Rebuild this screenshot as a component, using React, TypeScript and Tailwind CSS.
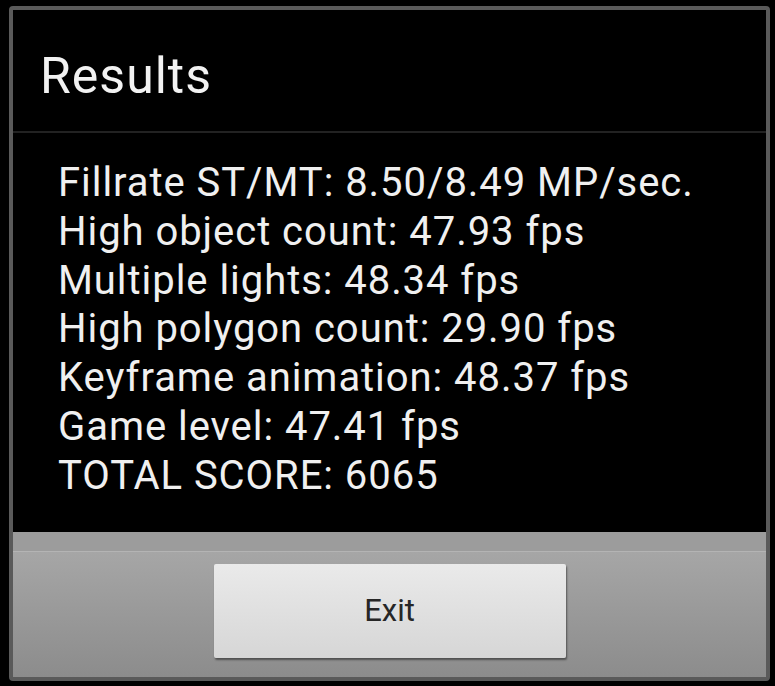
const lines = [
  'Fillrate ST/MT: 8.50/8.49 MP/sec.',
  'High object count: 47.93 fps',
  'Multiple lights: 48.34 fps',
  'High polygon count: 29.90 fps',
  'Keyframe animation: 48.37 fps',
  'Game level: 47.41 fps',
  'TOTAL SCORE: 6065',
]

export default function App() {
  return (
    <div className="min-h-screen w-full bg-black pl-[9px] pt-[6px] font-['Roboto',sans-serif]">
      <div className="flex h-[675px] w-[761px] flex-col overflow-hidden rounded-[4px] border-4 border-[#5a5a5a] bg-black">
        {/* Title */}
        <div className="flex h-[121px] shrink-0 items-center pl-[27px] pt-[11px]">
          <h1 className="text-[50px] leading-none tracking-[1px] text-[#f2f2f2]">Results</h1>
        </div>
        <div className="h-[2px] shrink-0 bg-[#222222]" />

        {/* Body */}
        <div className="flex-1 pl-[45px] pt-[26px]">
          {lines.map((l) => (
            <div key={l} className="text-[40px] leading-[48.8px] tracking-[0.95px] text-[#f0f0f0]">
              {l}
            </div>
          ))}
        </div>

        {/* Button bar */}
        <div className="flex h-[145px] shrink-0 flex-col">
          <div className="h-[19px] bg-[#9c9c9c]" />
          <div className="h-[1px] bg-[#b4b4b4]" />
          <div className="flex flex-1 justify-center bg-gradient-to-b from-[#a6a6a6] to-[#8c8c8c] pt-[12px]">
            <button className="h-[94px] w-[352px] rounded-[2px] bg-gradient-to-b from-[#eaeaea] to-[#d6d6d6] text-[31px] text-[#262626] shadow-[1px_2px_2px_rgba(0,0,0,0.45)]">
              Exit
            </button>
          </div>
        </div>
      </div>
    </div>
  )
}
